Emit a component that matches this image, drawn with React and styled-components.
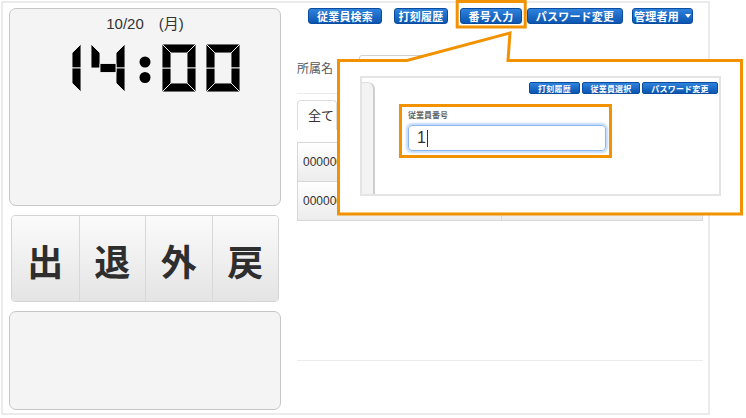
import React from "react";
import styled, { createGlobalStyle } from "styled-components";

const SANS = `"Liberation Sans", "Noto Sans CJK JP", sans-serif`;
const ORANGE = "#f39200";

const Global = createGlobalStyle`
  html, body { margin: 0; padding: 0; background: #fff; }
  body {
    font-family: ${SANS};
    color: #333;
    width: 746px;
    height: 418px;
    overflow: hidden;
    position: relative;
  }
`;

const Frame = styled.div`
  box-sizing: border-box;
  margin: 1px 0 0 1px;
  width: 709px;
  height: 414px;
  border: 2px solid #ebebeb;
  display: flex;
  gap: 16px;
  padding: 5px 5px 0 6px;
`;

const LeftCol = styled.div`
  width: 272px;
  display: flex;
  flex-direction: column;
  gap: 9px;
`;

const Card = styled.div`
  box-sizing: border-box;
  height: ${(p) => p.h}px;
  border: 1px solid #c6c6c6;
  border-radius: 7px;
  background: #f4f4f4;
  display: flex;
  flex-direction: column;
  align-items: center;
`;

const DateText = styled.div`
  margin-top: 6px;
  font-size: 15px;
  line-height: 18px;
  color: #333;
  white-space: pre;
`;

const ClockSvg = styled.svg`
  margin-top: 11px;
  display: block;
`;

const PunchGroup = styled.div`
  margin: 0 2px;
  height: 87px;
  box-sizing: border-box;
  display: grid;
  grid-template-columns: repeat(4, 1fr);
  border: 1px solid #d4d4d4;
  border-radius: 4px;
  overflow: hidden;
`;

const PunchButton = styled.div`
  display: flex;
  align-items: center;
  justify-content: center;
  background: linear-gradient(#fbfbfb, #e4e4e4);
  border-left: ${(p) => (p.first ? "none" : "1px solid #d8d8d8")};
  font-family: "Noto Sans CJK JP", sans-serif;
  font-weight: 700;
  font-size: 36px;
  color: #2e2e2e;
  padding-top: 2px;
`;

const RightCol = styled.div`
  width: 406px;
  display: flex;
  flex-direction: column;
`;

const TopBar = styled.div`
  display: flex;
  justify-content: flex-end;
  padding-right: 10px;
  height: 16px;
`;

const BlueBtn = styled.div`
  box-sizing: border-box;
  width: ${(p) => p.w}px;
  height: ${(p) => p.h || 16}px;
  margin-left: ${(p) => p.ml || 0}px;
  border: 1px solid #0a4d9e;
  border-radius: ${(p) => (p.small ? 2 : 3)}px;
  background: linear-gradient(#2f82dc, #0c56b1);
  color: #fff;
  font-size: ${(p) => (p.small ? 8 : 11)}px;
  font-weight: 700;
  display: flex;
  align-items: center;
  justify-content: center;
  gap: 6px;
  white-space: nowrap;
  letter-spacing: 0.2px;
`;

const Caret = styled.span`
  width: 0;
  height: 0;
  border-left: 3px solid transparent;
  border-right: 3px solid transparent;
  border-top: 4px solid #fff;
`;

const AffRow = styled.div`
  margin-top: 31px;
  height: 24px;
  display: flex;
  align-items: center;
`;

const AffLabel = styled.div`
  width: 62px;
  font-size: 12px;
  color: #555;
`;

const SelectBox = styled.div`
  box-sizing: border-box;
  width: 140px;
  height: 24px;
  border: 1px solid #d0d0d0;
  border-radius: 3px;
  background: #fff;
`;

const Divider = styled.div`
  margin-top: ${(p) => p.mt}px;
  border-top: 1px solid #ececec;
`;

const Tabs = styled.div`
  margin-top: 6px;
  display: flex;
  border-bottom: 1px solid #dddddd;
`;

const Tab = styled.div`
  box-sizing: border-box;
  width: 40px;
  height: 30px;
  border: 1px solid #dddddd;
  border-bottom: none;
  border-radius: 4px 4px 0 0;
  padding-left: 10px;
  line-height: 30px;
  font-size: 13px;
  color: #333;
  margin-bottom: -1px;
  background: #fff;
`;

const Table = styled.div`
  margin-top: 12px;
  border: 1px solid #d8d8d8;
`;

const TRow = styled.div`
  display: grid;
  grid-template-columns: 203px 1fr;
  height: 38px;
  background: linear-gradient(#ffffff, #ececec);
  border-top: ${(p) => (p.first ? "none" : "1px solid #d8d8d8")};
`;

const TCell = styled.div`
  display: flex;
  align-items: center;
  padding-left: 5px;
  font-size: 12px;
  color: #333;
  border-left: ${(p) => (p.first ? "none" : "1px solid #d8d8d8")};
`;

const Overlay = styled.svg`
  position: absolute;
  left: 0;
  top: 0;
  z-index: 2;
  pointer-events: none;
`;

const CalloutBody = styled.div`
  position: absolute;
  left: 340px;
  top: 62px;
  width: 400px;
  height: 151px;
  box-sizing: border-box;
  padding: 14px 19px 0 20px;
  z-index: 3;
`;

const Shot = styled.div`
  box-sizing: border-box;
  height: 120px;
  border: 2px solid #e4e4e4;
  display: flex;
  background: #fff;
`;

const Strip = styled.div`
  box-sizing: border-box;
  width: 13px;
  margin-top: 4px;
  background: #f3f3f3;
  border-top: 1px solid #dcdcdc;
  border-right: 2px solid #cfcfcf;
  border-top-right-radius: 7px;
`;

const ShotMain = styled.div`
  flex: 1;
  display: flex;
  flex-direction: column;
  padding: 4px 1px 0 0;
`;

const MiniBar = styled.div`
  display: flex;
  justify-content: flex-end;
  gap: 2px;
`;

const InputBox = styled.div`
  box-sizing: border-box;
  margin: 10px 0 0 24px;
  width: 213px;
  height: 54px;
  border: 3px solid ${ORANGE};
  padding: 4px 3px 0 6px;
`;

const FieldLabel = styled.div`
  height: 10px;
  font-size: 8px;
  line-height: 10px;
  color: #666;
  font-weight: 700;
`;

const Field = styled.div`
  box-sizing: border-box;
  margin-top: 4px;
  width: 198px;
  height: 26px;
  border: 1px solid #8ab6ee;
  border-radius: 4px;
  box-shadow: 0 0 2px 2px rgba(150, 190, 245, 0.55);
  padding-left: 8px;
  display: flex;
  align-items: center;
  font-size: 16px;
  color: #333;
`;

const Cursor = styled.span`
  display: inline-block;
  width: 1px;
  height: 17px;
  margin-left: 1px;
  background: #333;
`;

/* seven segment clock */
const W = 34;
const H = 48;
const T = 9;
const SEGS = {
  a: [[0, 0], [W, 0], [W - T, T], [T, T]],
  b: [[W, 0], [W, H / 2], [W - T, H / 2], [W - T, T]],
  c: [[W - T, H / 2], [W, H / 2], [W, H], [W - T, H - T]],
  d: [[T, H - T], [W - T, H - T], [W, H], [0, H]],
  e: [[0, H / 2], [T, H / 2], [T, H - T], [0, H]],
  f: [[0, 0], [T, T], [T, H / 2], [0, H / 2]],
  g: [[T, H / 2 - T / 2], [W - T, H / 2 - T / 2], [W - T, H / 2 + T / 2], [T, H / 2 + T / 2]],
};
const DIGITS = {
  "0": ["a", "b", "c", "d", "e", "f"],
  "1": ["b", "c"],
  "4": ["b", "c", "f", "g"],
};

function Digit({ ch, x }) {
  return (
    <g transform={`translate(${x},0)`}>
      {DIGITS[ch].map((s) => (
        <polygon
          key={s}
          points={SEGS[s].map((p) => p.join(",")).join(" ")}
          fill="#000"
          stroke="#f4f4f4"
          strokeWidth="0.9"
        />
      ))}
    </g>
  );
}

function Clock() {
  return (
    <ClockSvg width="196" height="48" viewBox="0 0 196 48">
      <Digit ch="1" x={0} />
      <Digit ch="4" x={44} />
      <circle cx="98" cy="18" r="5.5" fill="#000" />
      <circle cx="98" cy="33.5" r="5.5" fill="#000" />
      <Digit ch="0" x={115} />
      <Digit ch="0" x={159} />
    </ClockSvg>
  );
}

const topButtons = [
  { label: "従業員検索", w: 74, ml: 0 },
  { label: "打刻履歴", w: 54, ml: 12 },
  { label: "番号入力", w: 62, ml: 12 },
  { label: "パスワード変更", w: 96, ml: 5 },
];

const miniButtons = [
  { label: "打刻履歴", w: 51 },
  { label: "従業員選択", w: 58 },
  { label: "パスワード変更", w: 76 },
];

export default function App() {
  return (
    <>
      <Global />
      <Frame>
        <LeftCol>
          <Card h={198}>
            <DateText>10/20　(月)</DateText>
            <Clock />
          </Card>
          <PunchGroup>
            {["出", "退", "外", "戻"].map((c, i) => (
              <PunchButton key={c} first={i === 0}>
                {c}
              </PunchButton>
            ))}
          </PunchGroup>
          <Card h={99} />
        </LeftCol>
        <RightCol>
          <TopBar>
            {topButtons.map((b) => (
              <BlueBtn key={b.label} w={b.w} ml={b.ml}>
                {b.label}
              </BlueBtn>
            ))}
            <BlueBtn w={61} ml={9}>
              管理者用
              <Caret />
            </BlueBtn>
          </TopBar>
          <AffRow>
            <AffLabel>所属名</AffLabel>
            <SelectBox />
          </AffRow>
          <Divider mt={14} />
          <Tabs>
            <Tab>全て</Tab>
          </Tabs>
          <Table>
            <TRow first>
              <TCell first>0000000001</TCell>
              <TCell />
            </TRow>
            <TRow>
              <TCell first>0000000002</TCell>
              <TCell />
            </TRow>
          </Table>
          <Divider mt={139} />
        </RightCol>
      </Frame>

      <Overlay width="746" height="418" viewBox="0 0 746 418">
        <rect x="457.2" y="1.5" width="68" height="25.5" fill="none" stroke={ORANGE} strokeWidth="3" />
        <path
          d="M338.5 60.5 L407 60.5 L510 33 L508 60.5 L741.5 60.5 L741.5 214 L338.5 214 Z"
          fill="#fff"
          stroke={ORANGE}
          strokeWidth="3"
          strokeLinejoin="miter"
        />
      </Overlay>

      <CalloutBody>
        <Shot>
          <Strip />
          <ShotMain>
            <MiniBar>
              {miniButtons.map((b) => (
                <BlueBtn key={b.label} w={b.w} h={12} small>
                  {b.label}
                </BlueBtn>
              ))}
            </MiniBar>
            <InputBox>
              <FieldLabel>従業員番号</FieldLabel>
              <Field>
                1<Cursor />
              </Field>
            </InputBox>
          </ShotMain>
        </Shot>
      </CalloutBody>
    </>
  );
}
